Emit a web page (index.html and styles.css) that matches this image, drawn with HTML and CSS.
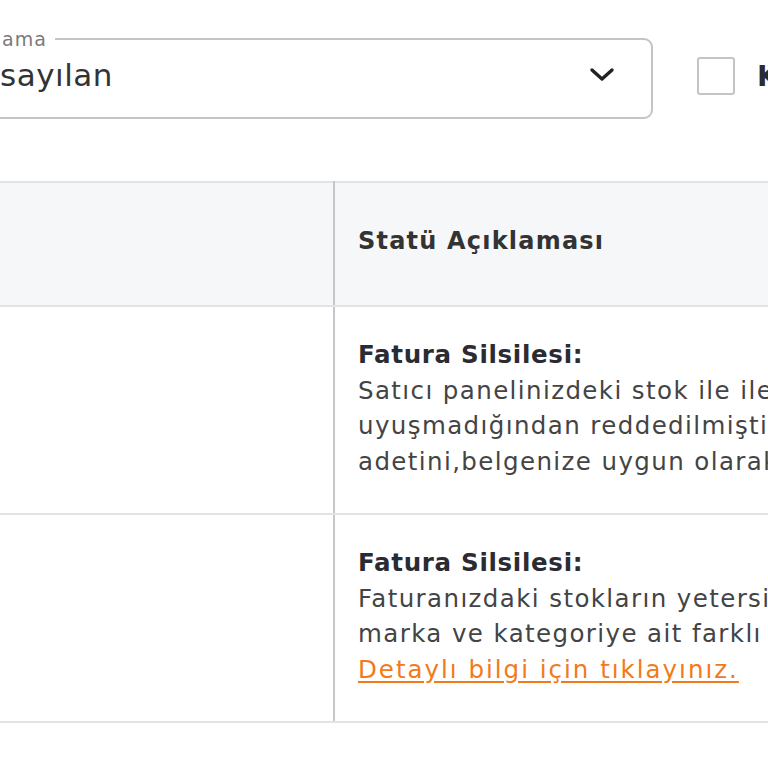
FILE: index.html
```html
<!DOCTYPE html>
<html lang="tr">
<head>
  <meta charset="UTF-8" />
  <meta name="viewport" content="width=device-width, initial-scale=1.0"/>
  <title>Faturalar</title>
  <link rel="stylesheet" href="styles.css">
</head>
<body>

  <div class="toolbar">
    <fieldset class="sort-box">
      <legend>Sıralama</legend>
      <div class="sort-value">
        <span>Varsayılan</span>
        <svg class="chevron" width="26" height="16" viewBox="0 0 26 16">
          <path d="M3 3 L13 12 L23 3" fill="none" stroke="#222" stroke-width="3.4" stroke-linecap="round" stroke-linejoin="round"/>
        </svg>
      </div>
    </fieldset>

    <label class="check">
      <span class="check-box"></span>
      <span class="check-text">Kargoya verilenler</span>
    </label>
  </div>

  <!-- invoices table -->
  <table class="grid">
    <colgroup>
      <col class="col-a">
      <col class="col-b">
    </colgroup>
    <thead>
      <tr>
        <th class="col-first">Fatura No</th>
        <th>Statü Açıklaması</th>
      </tr>
    </thead>
    <tbody>
      <tr>
        <td class="col-first"></td>
        <td>
          <b>Fatura Silsilesi:</b><br>
          Satıcı panelinizdeki stok ile ilettiğiniz faturadaki stok adedi<br>
          uyuşmadığından reddedilmiştir. Lütfen satıcı panelinizdeki stok<br>
          adetini,belgenize uygun olarak güncelleyiniz.
        </td>
      </tr>
      <tr>
        <td class="col-first"></td>
        <td>
          <b>Fatura Silsilesi:</b><br>
          Faturanızdaki stokların yetersiz olması nedeniyle reddedilmiştir.<br>
          marka ve kategoriye ait farklı bir fatura yükleyebilirsiniz.<br>
          <a href="#">Detaylı bilgi için tıklayınız.</a>
        </td>
      </tr>
    </tbody>
  </table>

</body>
</html>
```

FILE: styles.css
```css
html, body {
  width: 768px;
  height: 768px;
  overflow: hidden;
}

body {
  margin: 0;
  background: #fff;
  font-family: 'DejaVu Sans', 'Noto Sans', sans-serif;
  color: #333;
}

.toolbar {
  display: flex;
  align-items: center;
  gap: 44px;
  margin-top: 29px;
  margin-left: -64px;
}

.sort-box {
  flex-shrink: 0;
  width: 717px;
  height: 90px;
  margin: 0;
  padding: 0 36px 0 10px;
  box-sizing: border-box;
  border: 2px solid #c4c4c4;
  border-radius: 9px;
}

.sort-box legend {
  padding: 0 8px;
  margin-left: -1px;
  font-size: 19px;
  line-height: 20px;
  letter-spacing: 1px;
  color: #7a7a7a;
}

.sort-value {
  display: flex;
  justify-content: space-between;
  align-items: center;
  height: 60px;
  margin-top: -4px;
  font-size: 31px;
  letter-spacing: 0.5px;
  color: #333;
}

.chevron {
  display: block;
}

.check {
  flex-shrink: 0;
  display: flex;
  align-items: center;
  gap: 22px;
  margin-top: 4px;
  white-space: nowrap;
}

.check-box {
  width: 34px;
  height: 34px;
  border: 2px solid #c4c4c4;
  border-radius: 3px;
}

.check-text {
  font-size: 28px;
  font-weight: 600;
  color: #2b2b33;
}

.grid {
  width: 1400px;
  margin-top: 62px;
  margin-left: -200px;
  table-layout: fixed;
  border-collapse: collapse;
  white-space: nowrap;
}

.col-a {
  width: 534px;
}

.grid th,
.grid td {
  padding: 30px 23px 34px;
  text-align: left;
  vertical-align: top;
  border-top: 2px solid #e2e3e6;
  border-bottom: 2px solid #e2e3e6;
}

.grid th {
  height: 116px;
  padding-top: 0;
  padding-bottom: 6px;
  vertical-align: middle;
  background: #f6f7f9;
  font-size: 24px;
  font-weight: 600;
  letter-spacing: 1.2px;
  color: #333;
}

.grid th.col-first {
  color: transparent;
}

.grid .col-first {
  border-right: 2px solid #c6c7ca;
}

.grid td {
  font-size: 24.5px;
  line-height: 35.5px;
  letter-spacing: 1.4px;
  color: #444;
}

.grid td b {
  font-weight: 600;
  letter-spacing: 0.7px;
  color: #2b2b33;
}

.grid td a {
  color: #f27a1a;
  letter-spacing: 2px;
  text-decoration: underline;
  text-underline-offset: 3px;
}
```
